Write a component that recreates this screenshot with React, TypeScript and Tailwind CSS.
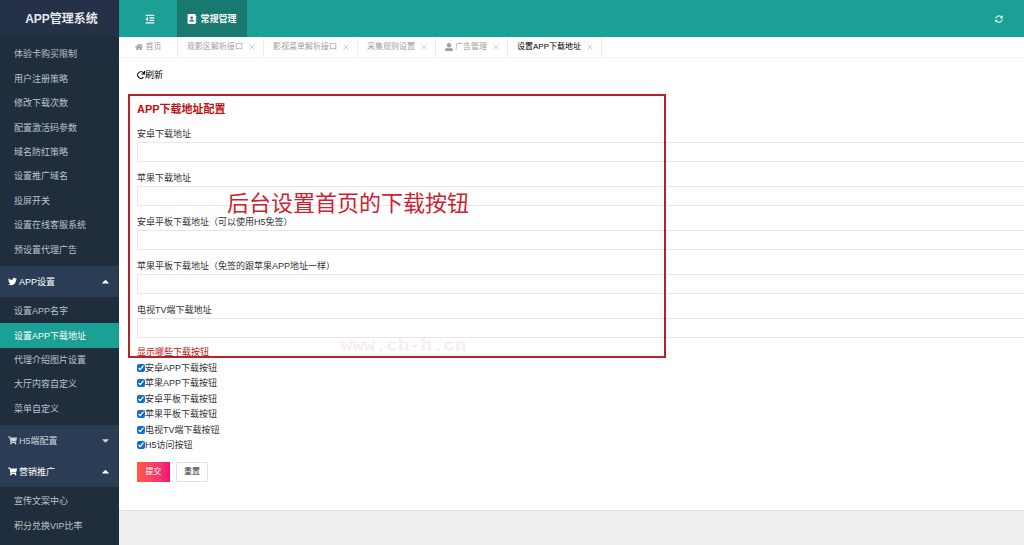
import { FaAddressBook, FaCaretDown, FaCaretUp, FaHome, FaOutdent, FaRedo, FaShoppingCart, FaSyncAlt, FaTwitter, FaUserAlt } from "react-icons/fa";

const generalItems = [
  "体验卡购买限制",
  "用户注册策略",
  "修改下载次数",
  "配置激活码参数",
  "域名防红策略",
  "设置推广域名",
  "投屏开关",
  "设置在线客服系统",
  "预设置代理广告",
];

const appItems = ["设置APP名字", "设置APP下载地址", "代理介绍图片设置", "大厅内容自定义", "菜单自定义"];

const promoItems = ["宣传文案中心", "积分兑换VIP比率"];

const tabs = ["观影区解析接口", "影视菜单解析接口", "采集规则设置", "广告管理", "设置APP下载地址"];

const fields = [
  { id: "android", label: "安卓下载地址" },
  { id: "ios", label: "苹果下载地址" },
  { id: "android-pad", label: "安卓平板下载地址（可以使用H5免签）" },
  { id: "ipad", label: "苹果平板下载地址（免签的跟苹果APP地址一样）" },
  { id: "tv", label: "电视TV端下载地址" },
];

const switches = ["安卓APP下载按钮", "苹果APP下载按钮", "安卓平板下载按钮", "苹果平板下载按钮", "电视TV端下载按钮", "H5访问按钮"];

function MenuItem({ text }: { text: string }) {
  const active = text === "设置APP下载地址";
  return (
    <li className="flex">
      <a
        href="#"
        className={
          active
            ? "flex flex-1 items-center bg-[#1aa094] pl-[14px] text-white"
            : "flex flex-1 items-center pl-[14px] text-[#bcc3cc]"
        }
      >
        {text}
      </a>
    </li>
  );
}

function GroupButton({ icon, text, open }: { icon: React.ReactNode; text: string; open: boolean }) {
  return (
    <button
      type="button"
      className={
        open
          ? "flex h-[31px] w-full items-center gap-[2px] bg-[#2b3c55] px-2 text-white"
          : "flex h-[31px] w-full items-center gap-[2px] bg-[#2b3c55] px-2 text-[#cdd3db]"
      }
    >
      {icon}
      <span className="flex-1 text-left">{text}</span>
      {open ? <FaCaretUp size={11} /> : <FaCaretDown size={11} />}
    </button>
  );
}

function Sidebar() {
  return (
    <aside className="w-[119px] shrink-0 bg-[#202d3d]">
      <h1 className="flex h-[37px] items-center justify-center bg-[#243147] pl-1 text-[12px] font-bold text-[#e6e9ee]">
        APP管理系统
      </h1>
      <nav className="pt-[3px]">
        <ul className="grid min-h-[226px] auto-rows-fr pt-[2px] pb-1">
          {generalItems.map((item) => (
            <MenuItem key={item} text={item} />
          ))}
        </ul>
        <GroupButton icon={<FaTwitter size={9} />} text="APP设置" open />
        <ul className="grid min-h-[128px] auto-rows-fr pt-[2px] pb-1">
          {appItems.map((item) => (
            <MenuItem key={item} text={item} />
          ))}
        </ul>
        <GroupButton icon={<FaShoppingCart size={9} />} text="H5端配置" open={false} />
        <GroupButton icon={<FaShoppingCart size={9} />} text="营销推广" open />
        <ul className="grid min-h-[55px] auto-rows-fr pt-[2px] pb-1">
          {promoItems.map((item) => (
            <MenuItem key={item} text={item} />
          ))}
        </ul>
      </nav>
    </aside>
  );
}

function TopBar() {
  return (
    <header className="flex h-[37px] items-stretch bg-[#1aa094] text-white">
      <button type="button" aria-label="收起菜单" className="flex w-[58px] items-center justify-center pl-1">
        <FaOutdent size={10} />
      </button>
      <button type="button" className="flex w-[70px] items-center justify-center gap-[3px] bg-[#197971] font-bold">
        <FaAddressBook size={10} />
        常规管理
      </button>
      <button type="button" aria-label="刷新页面" className="ml-auto flex w-[51px] items-center justify-center text-[#c9efea]">
        <FaSyncAlt size={8} />
      </button>
    </header>
  );
}

function TabBar() {
  return (
    <div className="flex h-[21px] border-b border-[#f0f0f0] text-[8px] text-[#a0a0a0]">
      <a href="#" className="flex w-[59px] items-center justify-center gap-[3px] border-r border-[#ececec]">
        <FaHome size={8} />
        首页
      </a>
      {tabs.map((tab) => (
        <div key={tab} className="flex items-center gap-[6px] border-r border-[#ececec] pr-2 pl-[9px]">
          <a
            href="#"
            className={tab === "设置APP下载地址" ? "flex items-center gap-[2px] text-black" : "flex items-center gap-[2px]"}
          >
            {tab === "广告管理" && <FaUserAlt size={8} />}
            {tab}
          </a>
          <button type="button" aria-label={`关闭${tab}`} className="text-[#c4c4c4]">
            <svg className="size-[6px]" viewBox="0 0 6 6" stroke="currentColor" strokeWidth="0.8">
              <path d="M0.5 0.5 5.5 5.5M5.5 0.5 0.5 5.5" />
            </svg>
          </button>
        </div>
      ))}
    </div>
  );
}

function DownloadForm() {
  return (
    <form className="relative pt-[7px]">
      <h2 className="text-[11px] leading-4 font-bold text-[#c01010]">APP下载地址配置</h2>
      <div className="mt-[9px] flex flex-col gap-2">
        {fields.map((field) => (
          <div key={field.id}>
            <label htmlFor={field.id} className="block leading-4">
              {field.label}
            </label>
            <input id={field.id} type="text" className="block h-5 w-full border border-r-0 border-[#e6e6e6] px-1 outline-none" />
          </div>
        ))}
      </div>
      <fieldset className="mt-[6px]">
        <legend className="leading-4 text-[#c01010]">显示哪些下载按钮</legend>
        <div className="grid min-h-[93px] auto-rows-fr justify-items-start">
          {switches.map((name) => (
            <label key={name} className="flex items-center">
              <input type="checkbox" defaultChecked className="size-2 accent-[#0f6fcb]" />
              {name}
            </label>
          ))}
        </div>
      </fieldset>
      <div className="mt-[9px] flex gap-[6px]">
        <button type="submit" className="h-5 w-[33px] bg-linear-to-r from-[#ff5a45] to-[#f5097a] text-[8px] text-white">
          提交
        </button>
        <button type="reset" className="h-5 w-8 border border-[#e0e0e0] bg-white text-[8px] text-[#333333]">
          重置
        </button>
      </div>

      {/* marker frame and note lying over the form */}
      <div className="pointer-events-none absolute top-0 -left-[9px] h-[264px] w-[538px] border-2 border-[#b8202a]">
        <p className="absolute top-[94px] left-[97px] text-[22px] leading-[28px] whitespace-nowrap text-[#cf2230]">
          后台设置首页的下载按钮
        </p>
        <p className="absolute bottom-0 left-[211px] font-['Liberation_Mono',monospace] text-[19px] leading-5 font-bold text-[#f8eeee]">
          www.ch-h.cn
        </p>
      </div>
    </form>
  );
}

export default function App() {
  return (
    <div className="flex h-screen overflow-hidden bg-[#eeeeee] font-['Liberation_Sans','Noto_Sans_CJK_SC',sans-serif] text-[9px] leading-3 text-[#333333]">
      <Sidebar />
      <div className="min-w-0 flex-1">
        <TopBar />
        <main className="border-b border-[#e2e2e2] bg-white pb-7">
          <TabBar />
          <div className="pl-[18px]">
            <a href="#" className="mt-[11px] mb-[13px] inline-flex items-center text-black">
              <FaRedo size={8} />
              刷新
            </a>
            <DownloadForm />
          </div>
        </main>
      </div>
    </div>
  );
}
